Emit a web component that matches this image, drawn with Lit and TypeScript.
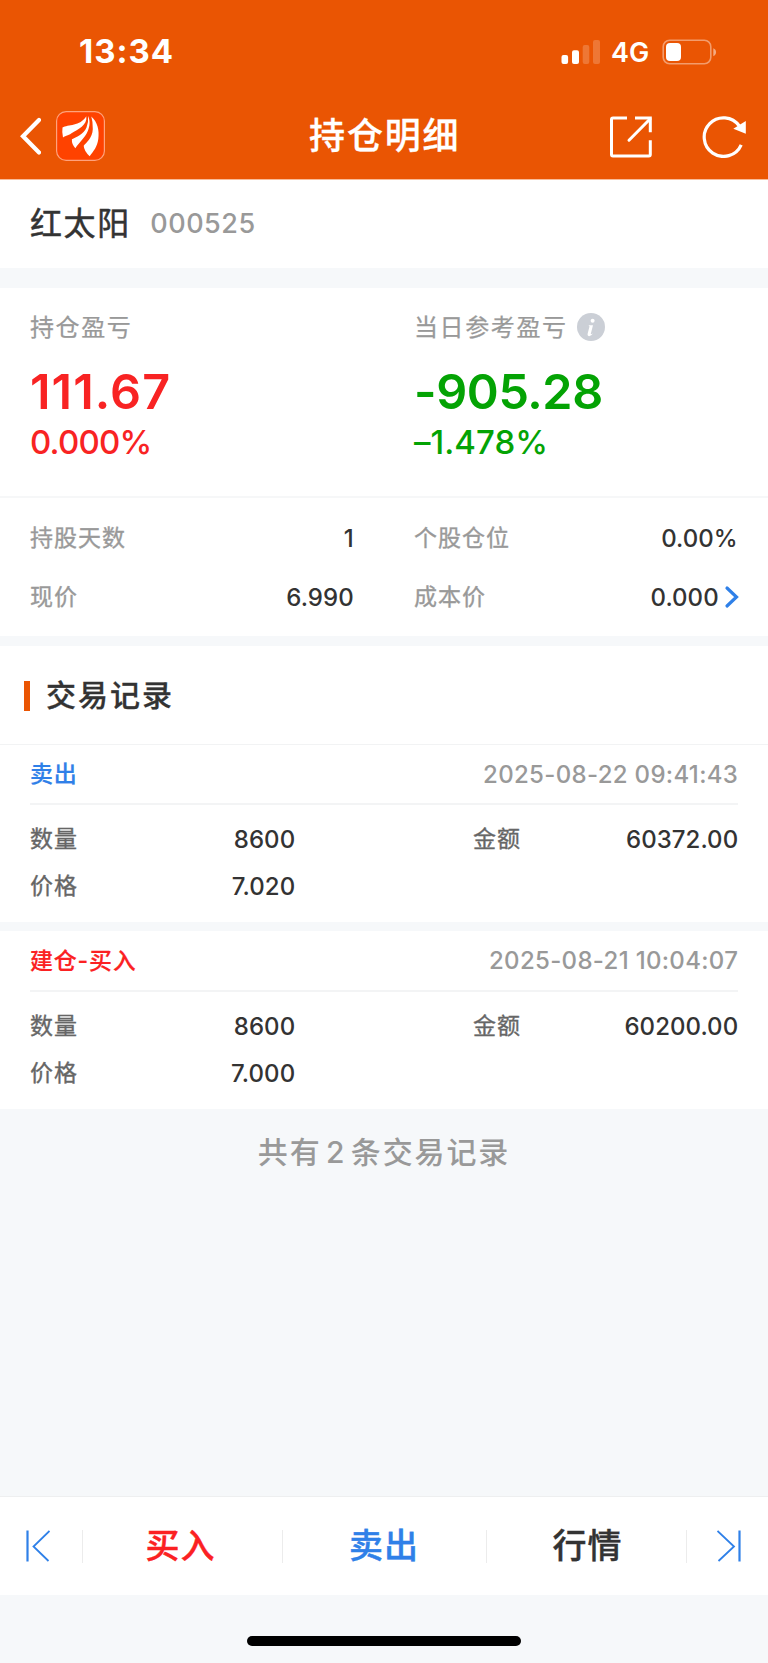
import { LitElement, html, css } from "lit";
import { customElement, property } from "lit/decorators.js";

interface Trade {
  side: "buy" | "sell";
  label: string;
  time: string;
  quantity: string;
  amount: string;
  price: string;
}

const TRADES: Trade[] = [
  { side: "sell", label: "卖出", time: "2025-08-22 09:41:43", quantity: "8600", amount: "60372.00", price: "7.020" },
  { side: "buy", label: "建仓-买入", time: "2025-08-21 10:04:07", quantity: "8600", amount: "60200.00", price: "7.000" },
];

@customElement("status-bar")
class StatusBar extends LitElement {
  static styles = css`
    :host { display: flex; height: 92px; padding: 11px 0 0; box-sizing: border-box; align-items: center; color: #fff; }
    .time { margin-left: 79px; font-size: 33px; font-weight: 700; line-height: 40px; letter-spacing: 1px; padding-bottom: 1px; }
    .right { margin-left: auto; margin-right: 51px; display: flex; align-items: center; }
    .net { font-size: 27px; font-weight: 600; line-height: 40px; margin: 2px 12px 0 11px; width: 39px; letter-spacing: 0.1px; }
    svg { display: block; }
  `;
  render() {
    return html`
      <span class="time">13:34</span>
      <div class="right">
        <svg width="40" height="26" viewBox="0 0 40 26" fill="#fff">
          <rect x="1.5" y="16" width="6.6" height="9" rx="2" />
          <rect x="12" y="11.3" width="7" height="13.7" rx="2" />
          <rect x="22.7" y="6" width="6.6" height="19" rx="2" opacity=".2" />
          <rect x="33" y="1" width="7" height="24" rx="2" opacity=".2" />
        </svg>
        <span class="net">4G</span>
        <svg width="55" height="26" viewBox="0 0 55 26">
          <rect x="1.2" y="1.2" width="47.6" height="23.6" rx="6.5" fill="none" stroke="#fff" stroke-opacity=".42" stroke-width="1.6" />
          <path d="M51.3 9.3 C55 10.5 55 16 51.3 17.2 Z" fill="#fff" opacity=".5" />
          <rect x="4" y="4" width="15" height="18" rx="4" fill="#fff" />
        </svg>
      </div>
    `;
  }
}

@customElement("nav-header")
class NavHeader extends LitElement {
  static styles = css`
    :host { display: grid; grid-template-columns: 1fr auto 1fr; align-items: center; height: 87.5px; color: #fff; }
    .left { display: flex; align-items: center; gap: 15px; padding-left: 20px; }
    .title { font-size: 36px; font-weight: 500; line-height: 54px; letter-spacing: 1.8px; margin-right: -1.4px; -webkit-text-stroke: 0.3px currentColor; }
    .actions { display: flex; justify-content: flex-end; align-items: center; gap: 49px; padding-right: 20px; }
    svg { display: block; }
  `;
  render() {
    return html`
      <div class="left">
        <svg width="21" height="38" viewBox="0 0 21 38">
          <path d="M19 3 L3 19.3 L19 35.5" fill="none" stroke="#fff" stroke-width="4.2" stroke-linecap="round" />
        </svg>
        <svg width="49" height="50" viewBox="0 0 49 50">
          <rect x=".6" y=".6" width="47.8" height="48.8" rx="9.5" fill="#ff4200" stroke="#ffa27c" stroke-width="1.2" />
          <path fill="#fff" d="M6.5 16.500 C12 13.2 24 15.5 30.3 5.2 C31.5 14.5 22 18 15.5 22.200 C11.500 25 10 24.300 7 26.500 Q5.800 21 6.500 16.500 Z" />
          <path fill="#fff" d="M32 5 C34.500 10 33.800 15 31.800 20 C28.500 27.500 23.500 31 19.300 37.200 Q15.500 33 15.900 28.300 C20 26 27.500 23.500 30.500 16.500 Q32.700 11.500 32 5 Z" />
          <path fill="#fff" d="M35.300 5.500 C41.500 11 43.500 19 42.300 28 C41.300 36 37.500 40 33.700 45.200 Q28 40 27.700 34.700 C30 32 36.500 27 36.800 18 Q37 11 35.300 5.500 Z" />
        </svg>
      </div>
      <div class="title">持仓明细</div>
      <div class="actions">
        <svg width="44" height="44" viewBox="0 0 44 44" fill="none" stroke="#fff" stroke-width="3">
          <path d="M18 3.900 H4 Q2.500 3.900 2.500 5.400 V40.500 Q2.500 42 4 42 H39.800 Q41.300 42 41.300 40.500 V26.200" />
          <path d="M26 3.900 H41.300 V18.200" />
          <path d="M41 5 L20 26.200" stroke-linecap="round" />
        </svg>
        <svg width="46" height="44" viewBox="0 0 46 44">
          <path d="M39.200 30.800 A19.300 19.300 0 1 1 37.300 12" fill="none" stroke="#fff" stroke-width="3.200" />
          <path d="M43.800 7 V19.800 L31.300 14.800 Z" fill="#fff" />
        </svg>
      </div>
    `;
  }
}

@customElement("stat-row")
class StatRow extends LitElement {
  @property() label = "";
  @property() value = "";
  @property({ type: Boolean }) link = false;
  static styles = css`
    :host { display: flex; align-items: center; height: 59px; }
    .label { font-size: 23px; line-height: 34px; color: #999; letter-spacing: 1px; padding-bottom: 1px; -webkit-text-stroke: 0.35px currentColor; }
    .value { margin-left: auto; font-size: 24px; font-weight: 540; color: #333; letter-spacing: 0.05px; margin-right: 0.3px; }
    svg { margin: 0 -1px 2px 5px; }
  `;
  render() {
    return html`<span class="label">${this.label}</span><span class="value">${this.value}</span>
      ${this.link
        ? html`<svg width="15" height="24" viewBox="0 0 15 24"><path d="M3 3 L12.500 12 L3 21" fill="none" stroke="#2f80e8" stroke-width="3.200" stroke-linecap="round"/></svg>`
        : ""}`;
  }
}

@customElement("trade-card")
class TradeCard extends LitElement {
  @property({ attribute: false }) trade!: Trade;
  static styles = css`
    :host { display: flex; flex-direction: column; height: 178px; background: #fff; padding: 0 30px; box-sizing: border-box; }
    :host(:first-child) { height: 177px; }
    .head { flex: 1; display: flex; justify-content: space-between; align-items: center; box-sizing: border-box; border-bottom: 2px solid #f3f4f5; }
    .side { font-size: 23px; font-weight: 500; line-height: 34px; letter-spacing: 0.8px; -webkit-text-stroke: 0.2px currentColor; }
    .sell { color: #2f80e8; }
    .buy { color: #fb2122; }
    .time { font-size: 24px; font-weight: 530; color: #999; letter-spacing: 0.32px; margin-right: -0.2px; }
    .body { display: grid; grid-template-columns: 265px 265px; column-gap: 178px; height: 117px; box-sizing: border-box; padding-top: 10.500px; align-content: start; }
    .cell { display: flex; justify-content: space-between; align-items: center; height: 47.5px; }
    .label { font-size: 23px; line-height: 34px; color: #666; letter-spacing: 1px; padding-bottom: 1px; -webkit-text-stroke: 0.35px currentColor; }
    .value { font-size: 24px; font-weight: 540; color: #333; letter-spacing: 0.05px; margin-right: -0.2px; }
  `;
  cell(label: string, value: string) {
    return html`<div class="cell"><span class="label">${label}</span><span class="value">${value}</span></div>`;
  }
  render() {
    const t = this.trade;
    return html`
      <div class="head"><span class="side ${t.side}">${t.label}</span><span class="time">${t.time}</span></div>
      <div class="body">
        ${this.cell("数量", t.quantity)} ${this.cell("金额", t.amount)} ${this.cell("价格", t.price)}
      </div>
    `;
  }
}

@customElement("bottom-bar")
class BottomBar extends LitElement {
  static styles = css`
    :host { display: grid; grid-template-columns: 82px 200px 204px 200px 82px; height: 99px; box-sizing: border-box; border-top: 1px solid #eeeff0; background: #fff; align-items: center; }
    .item { display: flex; align-items: center; justify-content: center; height: 33px; border-left: 1px solid #ececec; font-size: 34px; font-weight: 500; letter-spacing: 1px; box-sizing: border-box; -webkit-text-stroke: 0.4px currentColor; }
    .name { line-height: 50px; }
    .first { border: 0; padding-right: 6px; }
    .last { padding-left: 3px; }
    .buy { color: #fb2122; padding-right: 4px; }
    .sell { color: #2f80e8; padding-right: 1px; }
    .quote { color: #333; padding-left: 2px; }
  `;
  render() {
    return html`
      <div class="item first">
        <svg width="24" height="32" viewBox="0 0 24 32" fill="none" stroke="#2f80e8"><path d="M1.500 .5 V31.500" stroke-width="2.200" /><path d="M23.500 1 L7.500 16.500 L22.500 31" stroke-width="1.800" /></svg>
      </div>
      <div class="item buy"><span class="name">买入</span></div>
      <div class="item sell"><span class="name">卖出</span></div>
      <div class="item quote"><span class="name">行情</span></div>
      <div class="item last">
        <svg width="24" height="32" viewBox="0 0 24 32" fill="none" stroke="#2f80e8"><path d="M22.500 .5 V31.500" stroke-width="2.200" /><path d="M.5 1 L17 16.500 L1.500 31" stroke-width="1.800" /></svg>
      </div>
    `;
  }
}

@customElement("app-root")
class AppRoot extends LitElement {
  static styles = css`
    :host { display: flex; flex-direction: column; width: 768px; height: 1663px; overflow: hidden; background: #f6f8fa; font-family: Inter, "Noto Sans CJK SC", sans-serif; }
    .top { background: #ea5503; height: 180px; box-sizing: border-box; border-bottom: 1px solid #f8bb99; flex: none; }
    .stock { display: flex; align-items: center; height: 88px; padding: 0 30px; box-sizing: border-box; background: #fff; }
    .name { font-size: 32px; line-height: 48px; letter-spacing: 1.600px; color: #333; -webkit-text-stroke: 0.5px currentColor; }
    .code { font-size: 27px; line-height: 48px; font-weight: 530; color: #999; letter-spacing: 0.500px; margin-left: 19.500px; }
    .profits { display: grid; grid-template-columns: 384px 354px; height: 210px; margin-top: 20px; padding: 20px 0 0 30px; box-sizing: border-box; background: #fff; border-bottom: 2px solid #f6f7f8; }
    .caption { display: flex; align-items: center; height: 40px; font-size: 24px; letter-spacing: 1.600px; color: #999; -webkit-text-stroke: 0.25px currentColor; }
    .caption span { line-height: 36px; padding-bottom: 1px; }
    .info { margin: 0 0 2px 9px; }
    .big { font-size: 48.500px; line-height: 60px; font-weight: 600; margin-top: 14px; letter-spacing: -0.400px; }
    .gain { letter-spacing: 1.100px; }
    .pct { font-size: 33px; line-height: 40px; font-weight: 450; }
    .pct.up { letter-spacing: -0.800px; }
    .pct.down { letter-spacing: 0.050px; }
    .up { color: #f82323; }
    .down { color: #04a304; }
    .stats { display: grid; grid-template-columns: 324px 324px; column-gap: 60px; align-content: start; height: 138px; padding: 11px 30px 0; box-sizing: border-box; background: #fff; }
    .section { display: flex; align-items: center; height: 99px; margin-top: 10px; background: #fff; box-sizing: border-box; border-bottom: 1px solid #f2f3f4; padding: 1px 0 0 23.500px; }
    .mark { width: 6.500px; height: 30px; background: #ea5503; }
    .heading { margin-left: 16px; font-size: 30px; font-weight: 500; letter-spacing: 2px; color: #333; line-height: 44px; padding-bottom: 1px; -webkit-text-stroke: 0.3px currentColor; }
    .records { display: flex; flex-direction: column; gap: 9px; }
    .total { margin-top: 21px; text-align: center; font-size: 30px; font-weight: 500; line-height: 44px; color: #999; letter-spacing: 1.900px; word-spacing: -5.500px; }
    .foot { margin-top: auto; }
    .home { height: 68px; display: flex; justify-content: center; align-items: flex-end; padding-bottom: 17px; box-sizing: border-box; }
    .pill { width: 274px; height: 10px; border-radius: 5px; background: #000; }
  `;
  render() {
    return html`
      <div class="top"><status-bar></status-bar><nav-header></nav-header></div>
      <div class="stock"><span class="name">红太阳</span><span class="code">000525</span></div>
      <div class="profits">
        <div>
          <div class="caption"><span>持仓盈亏</span></div>
          <div class="big gain up">111.67</div>
          <div class="pct up">0.000%</div>
        </div>
        <div>
          <div class="caption"><span>当日参考盈亏</span>
            <svg class="info" width="28" height="28" viewBox="0 0 28 28">
              <circle cx="14" cy="14" r="14" fill="#cbcfd6" />
              <circle cx="15.600" cy="7.700" r="2" fill="#fff" />
              <path d="M11.500 12.200 H16 L13.800 20.700 Q13.700 21.800 16 20.300 Q14.500 23.300 12 23.200 Q10 22.800 10.800 20 L12.500 13.500 Z" fill="#fff" />
            </svg>
          </div>
          <div class="big down">-905.28</div>
          <div class="pct down">–1.478%</div>
        </div>
      </div>
      <div class="stats">
        <stat-row label="持股天数" value="1"></stat-row>
        <stat-row label="个股仓位" value="0.00%"></stat-row>
        <stat-row label="现价" value="6.990"></stat-row>
        <stat-row label="成本价" value="0.000" link></stat-row>
      </div>
      <div class="section"><span class="mark"></span><span class="heading">交易记录</span></div>
      <div class="records">${TRADES.map((t) => html`<trade-card .trade=${t}></trade-card>`)}</div>
      <div class="total">共有 2 条交易记录</div>
      <div class="foot">
        <bottom-bar></bottom-bar>
        <div class="home"><div class="pill"></div></div>
      </div>
    `;
  }
}
